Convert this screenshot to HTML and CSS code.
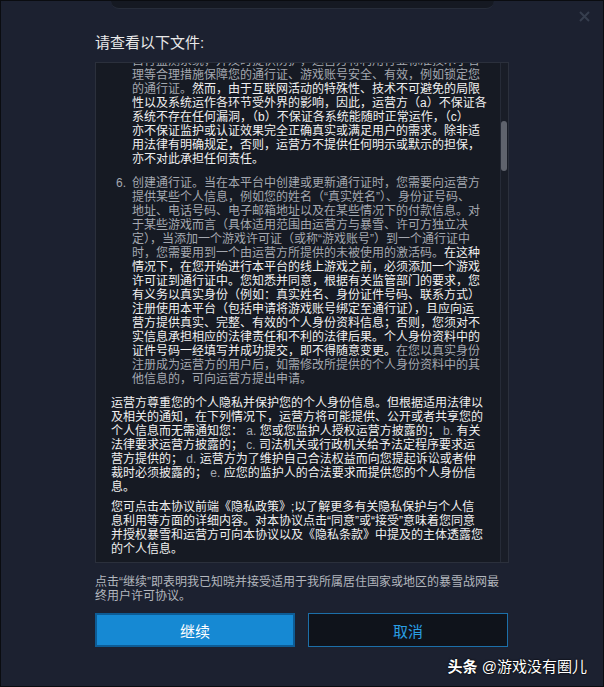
FILE: index.html
```html
<!DOCTYPE html>
<html lang="zh-CN">
<head>
  <meta charset="UTF-8">
  <title>最终用户许可协议</title>
  <meta name="viewport" content="width=device-width, initial-scale=1.0">
  <link rel="stylesheet" href="styles.css">
</head>
<body>
  <div class="dialog">
    <!-- 顶部装饰条 -->
    <div class="tab"></div>
    <span class="close">
      <svg width="11" height="11" viewBox="0 0 11 11"><path d="M1 1L10 10M10 1L1 10" stroke="#363e4e" stroke-width="2"/></svg>
    </span>

    <h1 class="title">请查看以下文件:</h1>

    <!-- 协议内容 -->
    <div class="doc">
      <div class="doc-text">
        <div class="item">
          <span class="num"></span>
          <p><span class="dim">自行监测系统，并及时提供防护，运营方将利用行业标准技术手合<br>
          理等合理措施保障您的通行证、游戏账号安全、有效，例如锁定您<br>
          的通行证。</span>然而，由于互联网活动的特殊性、技术不可避免的局限<br>
          性以及系统运作各环节受外界的影响，因此，运营方（a）不保证各<br>
          系统不存在任何漏洞，（b）不保证各系统能随时正常运作，（c）<br>
          亦不保证监护或认证效果完全正确真实或满足用户的需求。除非适<br>
          用法律有明确规定，否则，运营方不提供任何明示或默示的担保，<br>
          亦不对此承担任何责任。</p>
        </div>
        <div class="item">
          <span class="num">6.</span>
          <p><span class="dim">创建通行证。当在本平台中创建或更新通行证时，您需要向运营方<br>
          提供某些个人信息，例如您的姓名（“真实姓名”）、身份证号码、<br>
          地址、电话号码、电子邮箱地址以及在某些情况下的付款信息。对<br>
          于某些游戏而言（具体适用范围由运营方与暴雪、许可方独立决<br>
          定），当添加一个游戏许可证（或称“游戏账号”）到一个通行证中<br>
          时，您需要用到一个由运营方所提供的未被使用的激活码。</span>在这种<br>
          情况下，在您开始进行本平台的线上游戏之前，必须添加一个游戏<br>
          许可证到通行证中。您知悉并同意，根据有关监管部门的要求，您<br>
          有义务以真实身份（例如：真实姓名、身份证件号码、联系方式）<br>
          注册使用本平台（包括申请将游戏账号绑定至通行证），且应向运<br>
          营方提供真实、完整、有效的个人身份资料信息；否则，您须对不<br>
          实信息承担相应的法律责任和不利的法律后果。个人身份资料中的<br>
          证件号码一经填写并成功提交，即不得随意变更。<span class="dim">在您以真实身份<br>
          注册成为运营方的用户后，如需修改所提供的个人身份资料中的其<br>
          他信息的，可向运营方提出申请。</span></p>
        </div>
        <p class="para">运营方尊重您的个人隐私并保护您的个人身份信息。但根据适用法律以<br>
        及相关的通知，在下列情况下，运营方将可能提供、公开或者共享您的<br>
        个人信息而无需通知您： <span class="dim">a.</span> 您或您监护人授权运营方披露的； <span class="dim">b.</span> 有关<br>
        法律要求运营方披露的； <span class="dim">c.</span> 司法机关或行政机关给予法定程序要求运<br>
        营方提供的； <span class="dim">d.</span> 运营方为了维护自己合法权益而向您提起诉讼或者仲<br>
        裁时必须披露的； <span class="dim">e.</span> 应您的监护人的合法要求而提供您的个人身份信<br>
        息。</p>
        <p class="para">您可点击本协议前端《隐私政策》;以了解更多有关隐私保护与个人信<br>
        息利用等方面的详细内容。对本协议点击“同意”或“接受”意味着您同意<br>
        并授权暴雪和运营方可向本协议以及《隐私条款》中提及的主体透露您<br>
        的个人信息。</p>
      </div>
      <div class="scrollbar"><div class="thumb"></div></div>
    </div>

    <p class="notice">点击“继续”即表明我已知晓并接受适用于我所属居住国家或地区的暴雪战网最<br>终用户许可协议。</p>

    <div class="actions">
      <button class="btn btn-primary">继续</button>
      <button class="btn btn-secondary">取消</button>
    </div>

    <div class="watermark"><b>头条</b> @游戏没有圈儿</div>
  </div>
</body>
</html>
```

FILE: styles.css
```css
body {
  margin: 0; padding: 0;
  background: #0b0d11;
  font-family: "Liberation Sans", "Noto Sans CJK SC", sans-serif;
}

.dialog {
  position: relative;
  box-sizing: border-box;
  width: 604px;
  height: 687px;
  padding: 0 94px 0 94px;
  border: 1px solid #0a0c10;
  background: #1c2130;
  color: #eee;
}

/* 顶部装饰条 */
.tab {
  width: 383px;
  height: 7px;
  margin: 0 auto;
  background: #151922;
  border-bottom: 1px solid #272d3a;
  border-radius: 0 0 10px 10px;
}
.close {
  position: absolute;
  top: 10px;
  right: 13px;
  line-height: 0;
}

.title {
  margin: 24px 0 9px;
  font-size: 15px;
  line-height: 20px;
  font-weight: normal;
  color: #e9e9e9;
}

/* 协议文本框 */
.doc {
  display: flex;
  height: 501px;
  box-sizing: border-box;
  border: 1px solid #2b303c;
  background: #161a23;
  overflow: hidden;
}
.doc-text {
  flex: 1;
  margin-top: -9px;
  padding-left: 15px;
  font-size: 12px;
  line-height: 14px;
  white-space: nowrap;
  color: #f0f0f0;
}
.doc-text p {
  margin: 0;
}
.dim {
  color: #a4a8b0;
}
.item {
  display: flex;
  margin-bottom: 10px;
  padding-left: 5px;
}
.item .num {
  width: 16px;
  flex: none;
  color: #a4a8b0;
}
.doc-text .para {
  margin-bottom: 6px;
}

.scrollbar {
  width: 7px;
  flex: none;
  border-left: 1px solid #262b37;
  background: #191d27;
}
.thumb {
  width: 6px;
  height: 50px;
  margin: 58px 0 0 0;
  border-radius: 3px;
  background: #5f636d;
}

.notice {
  margin: 12px 0 10px;
  font-size: 12px;
  line-height: 14px;
  white-space: nowrap;
  color: #b3b7be;
}

.actions {
  display: flex;
  gap: 13px;
}
.btn {
  width: 200px;
  height: 34px;
  font-family: inherit;
  font-size: 15px;
  cursor: pointer;
  border-radius: 0;
}
.btn-primary {
  color: #fff;
  background: #1689d3;
  border: 2px solid #0d5c95;
}
.btn-secondary {
  color: #2a9fe4;
  background: #0f131b;
  border: 1px solid #1c6fa9;
}

/* 水印 */
.watermark {
  position: absolute;
  right: 16px;
  bottom: 10px;
  font-size: 15px;
  color: #fff;
  text-shadow: 0 0 2px #000, 0 0 1px #000;
}
```
